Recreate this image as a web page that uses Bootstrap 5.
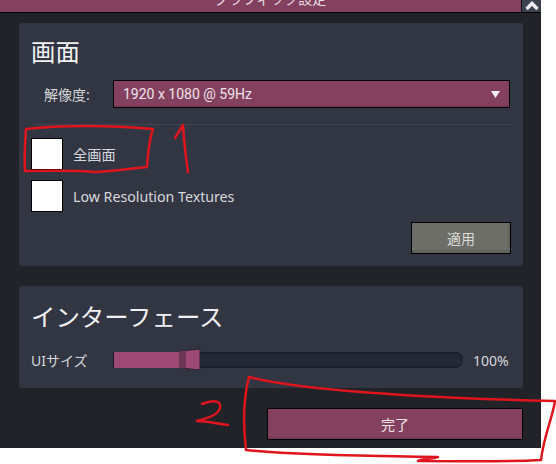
<!DOCTYPE html>
<html lang="ja">
<head>
<meta charset="utf-8">
<title>グラフィック設定</title>
<link href="https://cdn.jsdelivr.net/npm/bootstrap@5.3.0/dist/css/bootstrap.min.css" rel="stylesheet">
<style>
html,body{margin:0;background:#fff;overflow:hidden}
body{font-family:"Noto Sans","Noto Sans CJK JP",sans-serif;color:#e2e2e6;width:556px;height:464px;position:relative}
.gfx-win{width:541px;height:448px;background:#212329}
.gfx-top{height:13px}
.gfx-title{height:13px;background:#84415f;border-bottom:1px solid #000;overflow:hidden;font-size:14px;line-height:20px;align-items:flex-end;width:521px;color:#e8dfe5;padding-left:20px}
.gfx-title span{margin-bottom:3px}
.gfx-close{width:20px;height:13px;background:#3c4350;border-bottom:1px solid #000;border-left:1px solid #111}
.gfx-panel{margin-left:19px;width:504px;background:#323642;border-radius:3px;padding:0 12px}
.gfx-p1{margin-top:10px;height:243px}
.gfx-p2{margin-top:20px;height:102px}
.gfx-h{font-size:24.4px;line-height:30px;color:#f1f1f3;font-weight:400}
.gfx-p1 .gfx-h{padding-top:14px;height:45px}
.gfx-p2 .gfx-h{padding-top:16px;height:62px}
.gfx-lbl{font-size:14px;color:#d6d6da;margin:0}
.gfx-res{margin-top:12px;height:28px}
.gfx-res .gfx-lbl{width:82px;padding-left:13px}
.gfx-sel{width:397px;height:28px;background:#84415f;border:1px solid #000;box-shadow:inset 0 -2px 0 #793a56;font-size:14px;padding:0 9px;color:#eee4ea;font-family:Roboto,"Noto Sans",sans-serif}
.gfx-caret{width:9px;height:7px}
.gfx-sep{height:1px;background:#41444e;margin-top:16px}
.gfx-chk{height:32px;gap:10px}
.gfx-box{width:32px;height:32px;background:#fff;border:1px solid #000;flex:none}
.gfx-chk1{margin-top:13px}
.gfx-chk2{margin-top:10px}
.gfx-chk .gfx-lbl{font-size:14.2px;color:#d8d8dc;padding-top:1px}
.gfx-apply-row{margin-top:10px}
.gfx-apply{width:100px;height:32px;background:#6e6e68;border:1px solid #000;box-shadow:inset -2px -3px 0 #63635e;font-size:14px;color:#dcdcd8;border-radius:0;padding:0}
.gfx-ui{height:24px}
.gfx-ui .gfx-lbl{width:82px}
.gfx-track{width:350px;height:16px;background:#232936;border-radius:0 8px 8px 0;box-shadow:inset 0 2px 0 #1c202b,inset 0 -2px 0 #1c202b;position:relative}
.gfx-fill{width:68px;height:16px;background:#9d4875;border-left:1px solid #1a1a22}
.gfx-thumb{position:absolute;left:66px;top:-4px;width:22px;height:23px}
.gfx-pct{font-size:14px;margin-left:10px;color:#d8d8dc}
.gfx-done-row{margin-top:20px;padding-left:267px}
.gfx-done{width:256px;height:32px;background:#84415f;border:1px solid #000;box-shadow:inset 0 -2px 0 #75395a;border-radius:0;font-size:14px;color:#eee4ea;padding:0}
.gfx-ink{position:absolute;left:0;top:0;pointer-events:none}
</style>
</head>
<body>
<div class="gfx-win d-flex flex-column">
  <div class="gfx-top d-flex">
    <div class="gfx-title d-flex justify-content-center"><span>グラフィック設定</span></div>
    <div class="gfx-close d-flex justify-content-center">
      <svg width="16" height="12" viewBox="0 0 16 12"><path d="M2.5 9 L8 3.5 L13.5 9" fill="none" stroke="#eeeef2" stroke-width="3.4"/></svg>
    </div>
  </div>
  <section class="gfx-panel gfx-p1">
    <h2 class="gfx-h m-0">画面</h2>
    <div class="gfx-res d-flex align-items-center">
      <label class="gfx-lbl">解像度:</label>
      <div class="gfx-sel d-flex align-items-center justify-content-between">
        <span>1920 x 1080 @ 59Hz</span>
        <svg class="gfx-caret" viewBox="0 0 9 7"><path d="M0 0H9L4.5 7Z" fill="#f2f0f2"/></svg>
      </div>
    </div>
    <div class="gfx-sep"></div>
    <div class="gfx-chk gfx-chk1 d-flex align-items-center"><div class="gfx-box"></div><span class="gfx-lbl">全画面</span></div>
    <div class="gfx-chk gfx-chk2 d-flex align-items-center"><div class="gfx-box"></div><span class="gfx-lbl">Low Resolution Textures</span></div>
    <div class="gfx-apply-row d-flex justify-content-end"><button class="btn gfx-apply" type="button">適用</button></div>
  </section>
  <section class="gfx-panel gfx-p2">
    <h2 class="gfx-h m-0">インターフェース</h2>
    <div class="gfx-ui d-flex align-items-center">
      <span class="gfx-lbl">UIサイズ</span>
      <div class="gfx-track">
        <div class="gfx-fill"></div>
        <svg class="gfx-thumb" viewBox="0 0 22 23"><path d="M1 3 L21 1 V22 L1 20Z" fill="#9d4875" stroke="#26202b"/><path d="M1 3 L7 2.5 V20.5 L1 20Z" fill="#6f3555"/></svg>
      </div>
      <span class="gfx-pct">100%</span>
    </div>
  </section>
  <div class="gfx-done-row"><button class="btn gfx-done" type="button">完了</button></div>
</div>
<svg class="gfx-ink" width="556" height="464" viewBox="0 0 556 464" fill="none" stroke="#e0141c" stroke-width="2.5" stroke-linecap="round" stroke-linejoin="round">
  <path d="M26 129 C60 125 110 125 153 129 C149 140 148 152 147 167 C125 169 110 172 95 172 C75 170 50 171 25 171 C24 155 25 142 26 129Z"/>
  <path d="M175 138 L183 125 C184 142 186 158 188 172"/>
  <path d="M202 404 C212 400 222 400 220 408 C218 415 208 418 197 421 C208 421 218 424 228 425"/>
  <path d="M249 377 C300 390 420 398 555 401 C552 420 544 435 541 460 C510 462 470 461 418 461 C425 458 435 459 438 457 C380 456 300 456 246 450 C243 425 243 400 249 377Z"/>
</svg>
<script src="https://cdn.jsdelivr.net/npm/bootstrap@5.3.0/dist/js/bootstrap.bundle.min.js"></script>
</body>
</html>
